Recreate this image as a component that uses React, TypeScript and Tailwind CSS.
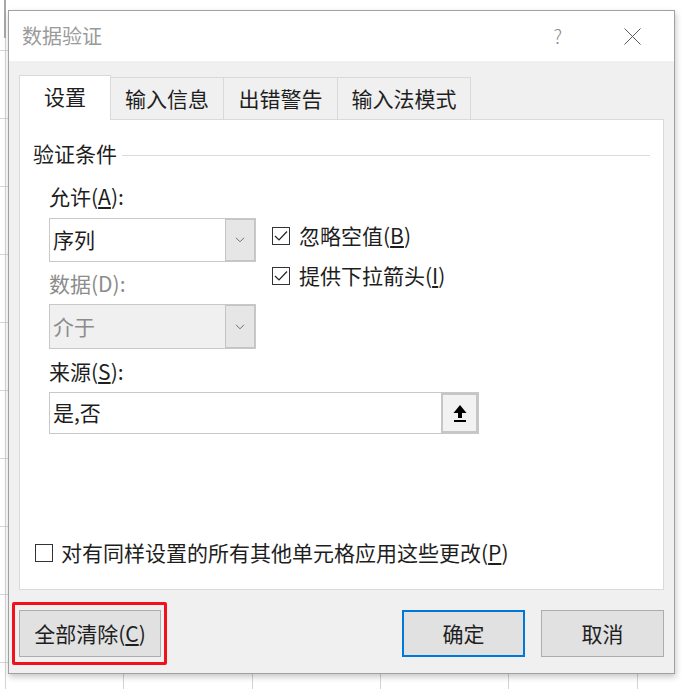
import React from 'react'

const font = { fontFamily: '"Noto Sans CJK SC", "Noto Sans", sans-serif' }

const Chevron = () => (
  <svg width="10" height="6" viewBox="0 0 10 6" fill="none">
    <polyline points="1,0.8 5,4.8 9,0.8" stroke="#6b6b6b" strokeWidth="1" />
  </svg>
)

const CheckBox = ({ checked }: { checked: boolean }) => (
  <div className="flex h-[18px] w-[18px] shrink-0 items-center justify-center border border-[#333333] bg-white">
    {checked && (
      <svg width="16" height="16" viewBox="0 0 16 16" fill="none">
        <polyline points="2,8 6,12 14,3.5" stroke="#222222" strokeWidth="1.2" />
      </svg>
    )}
  </div>
)

interface SelectProps {
  value: string
  disabled?: boolean
}

const Select: React.FC<SelectProps> = ({ value, disabled = false }) => (
  <div
    className={`flex h-full w-full border border-[#c8c8c8] ${disabled ? 'bg-[#f0f0f0] text-[#8c8c8c]' : 'bg-white text-[#1e1e1e]'}`}
  >
    <div className="flex flex-1 items-center pb-[2px] pl-[3px] text-[21px] leading-[28px]">{value}</div>
    <div className="flex w-[30px] items-center justify-center border border-[#c4c4c4] bg-[#e6e6e6]">
      <Chevron />
    </div>
  </div>
)

const Tab = ({ label, width, active = false }: { label: string; width: string; active?: boolean }) => (
  <div
    className={`flex items-center justify-center text-[21px] leading-[28px] text-[#1e1e1e] ${width} ${
      active
        ? 'relative z-10 -mb-px h-[45px] border-x border-t border-[#d9d9d9] bg-white pb-[4px]'
        : 'h-[42px] border-r border-t border-[#d9d9d9] bg-[#f0f0f0] pb-[2px]'
    }`}
  >
    {label}
  </div>
)

const U = ({ children }: { children: React.ReactNode }) => (
  <span className="underline underline-offset-2">{children}</span>
)

export default function App() {
  const ticks = [50, 118, 186, 254, 322, 390, 458, 526, 594, 662]
  const cols = [123, 252, 380, 508, 637]

  return (
    <div className="relative h-[689px] w-[682px] overflow-hidden bg-white" style={font}>
      {/* spreadsheet behind the dialog */}
      <div className="absolute left-[5px] top-0 h-full w-px bg-[#d4d4d4]" />
      <div className="absolute left-[4px] top-0 h-[38px] w-[2px] bg-[#a8a8a8]" />
      {ticks.map((t) => (
        <div key={t} className="absolute left-0 h-px w-[8px] bg-[#d4d4d4]" style={{ top: t }} />
      ))}
      {cols.map((c) => (
        <div key={c} className="absolute top-[672px] h-[17px] w-px bg-[#d4d4d4]" style={{ left: c }} />
      ))}

      {/* dialog */}
      <div className="absolute left-[8px] top-[10px] flex h-[664px] w-[667px] flex-col border border-[#a0a0a0] bg-[#f0f0f0] shadow-[1px_3px_6px_rgba(0,0,0,0.22)]">
        {/* title bar */}
        <div className="flex h-[50px] items-center bg-white pl-[13px]">
          <span className="text-[20px] leading-[26px] text-[#9a9a9a]">数据验证</span>
          <span className="ml-auto mr-[62px] text-[19px] font-light leading-[26px] text-[#8a8a8a]">?</span>
          <svg className="mr-[33px]" width="17" height="17" viewBox="0 0 17 17" fill="none">
            <line x1="0.5" y1="0.5" x2="16.5" y2="16.5" stroke="#5a5a5a" strokeWidth="1" />
            <line x1="16.5" y1="0.5" x2="0.5" y2="16.5" stroke="#5a5a5a" strokeWidth="1" />
          </svg>
        </div>

        {/* body */}
        <div className="flex flex-1 flex-col px-[10px] pt-[14px]">
          <div className="flex h-[44px] items-end">
            <Tab label="设置" width="w-[92px]" active />
            <Tab label="输入信息" width="w-[113px]" />
            <Tab label="出错警告" width="w-[114px]" />
            <Tab label="输入法模式" width="w-[133px]" />
          </div>

          <div className="flex h-[471px] flex-col border border-[#d9d9d9] bg-white px-[13px] pt-[21px] text-[21px] leading-[24px] text-[#1e1e1e]">
            <div className="flex h-[28px] items-center pb-[4px]">
              <span>验证条件</span>
              <div className="ml-[5px] mt-[4px] h-px flex-1 bg-[#dcdcdc]" />
            </div>

            <div className="ml-[16px] mt-[15px] flex">
              <div className="w-[207px]">
                <div className="h-[28px]">
                  允许(<U>A</U>):
                </div>
                <div className="mt-[6px] h-[44px]">
                  <Select value="序列" />
                </div>
                <div className="mt-[9px] h-[28px] text-[#8c8c8c]">数据(D):</div>
                <div className="mt-[5px] h-[45px]">
                  <Select value="介于" disabled />
                </div>
              </div>

              <div className="ml-[16px] flex flex-col gap-[12px] pt-[38px]">
                <div className="flex h-[28px] items-center gap-[9px]">
                  <CheckBox checked />
                  <span className="-mt-[3px]">
                    忽略空值(<U>B</U>)
                  </span>
                </div>
                <div className="flex h-[28px] items-center gap-[9px]">
                  <CheckBox checked />
                  <span className="-mt-[3px]">
                    提供下拉箭头(<U>I</U>)
                  </span>
                </div>
              </div>
            </div>

            <div className="ml-[16px] mt-[10px] h-[28px]">
              来源(<U>S</U>):
            </div>
            <div className="ml-[16px] mt-[5px] flex h-[42px] w-[430px] border border-[#c8c8c8] bg-white">
              <div className="flex flex-1 items-center pb-[2px] pl-[3px] leading-[28px]">是,否</div>
              <div className="flex w-[37px] items-center justify-center border-2 border-[#c6c6c6] bg-[#f2f2f2] pt-[2px]">
                <svg width="14" height="18" viewBox="0 0 14 18" fill="#000000">
                  <polygon points="7,0 13.5,8 0.5,8" />
                  <rect x="5" y="7" width="4" height="6" />
                  <rect x="1" y="15" width="12" height="2" />
                </svg>
              </div>
            </div>

            <div className="mb-[22px] ml-[2px] mt-auto flex h-[28px] items-center gap-[8px]">
              <CheckBox checked={false} />
              <span className="-mt-[3px]">
                对有同样设置的所有其他单元格应用这些更改(<U>P</U>)
              </span>
            </div>
          </div>

          {/* buttons */}
          <div className="mt-[20px] flex h-[47px] items-center text-[21px] leading-[28px] text-[#1e1e1e]">
            <div className="-ml-[7px] rounded-[2px] border-[3px] border-[#f2101a] py-[5px] pl-[4px] pr-[3px]">
              <button className="flex h-[47px] w-[142px] items-center justify-center border border-[#adadad] bg-[#e1e1e1] pb-[2px]">
                全部清除(<U>C</U>)
              </button>
            </div>
            <div className="flex-1" />
            <button className="flex h-[47px] w-[123px] items-center justify-center border-2 border-[#0078d7] bg-[#e1e1e1] pb-[2px]">
              确定
            </button>
            <button className="ml-[16px] flex h-[47px] w-[123px] items-center justify-center border border-[#adadad] bg-[#e1e1e1] pb-[2px]">
              取消
            </button>
          </div>
        </div>
      </div>
    </div>
  )
}
